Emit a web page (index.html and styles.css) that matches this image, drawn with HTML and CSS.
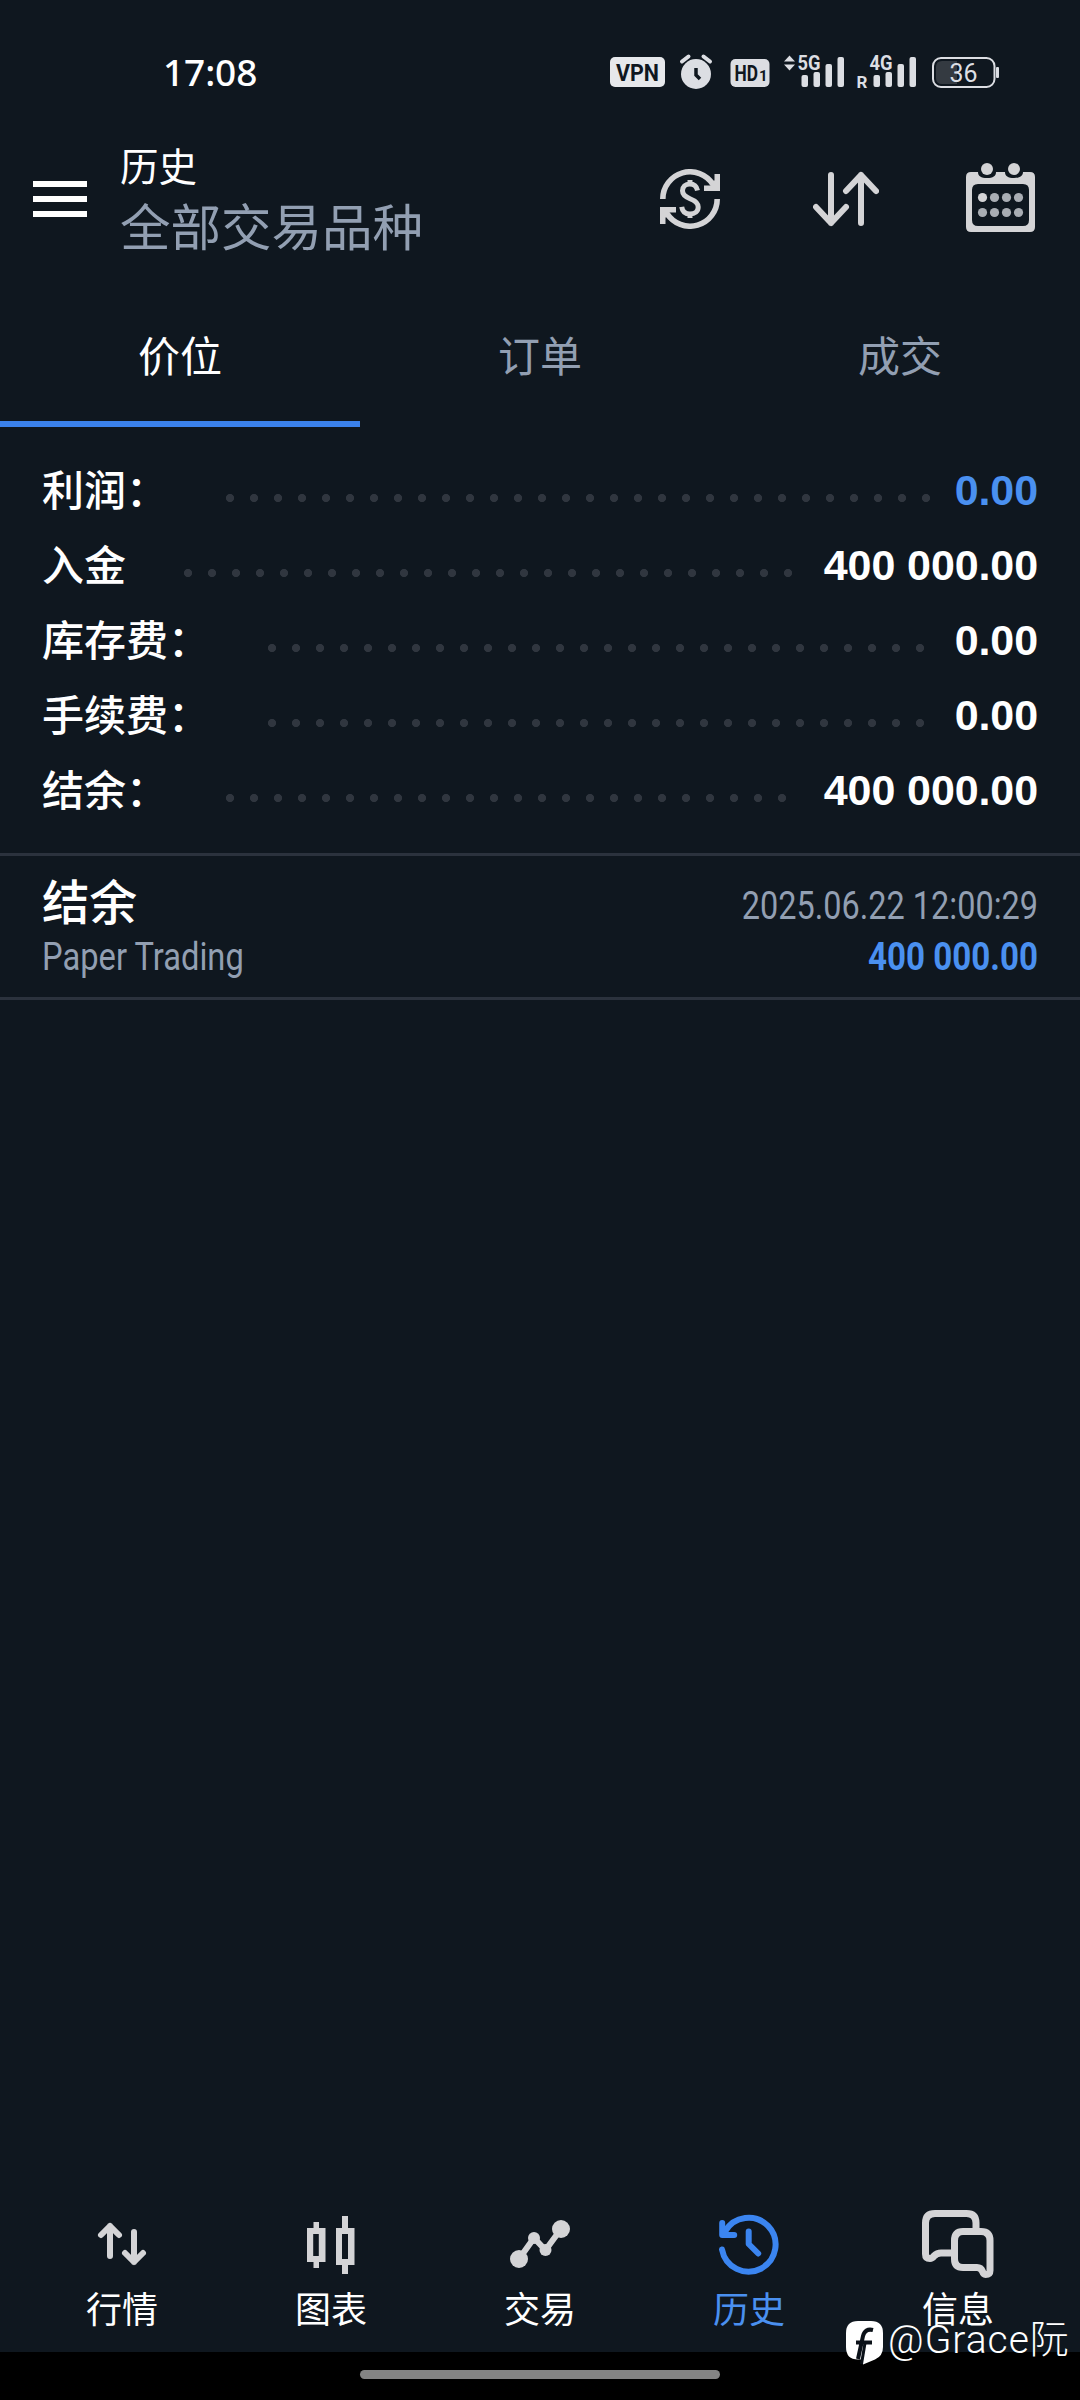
FILE: index.html
```html
<!DOCTYPE html>
<html lang="zh-CN">
<head>
<meta charset="utf-8">
<title>历史</title>
<link rel="stylesheet" href="styles.css">
</head>
<body>
<div class="screen">
  <div class="status">
    <span class="clock">17:08</span>
    <svg class="status-icons" width="392" height="40" viewBox="610 52 392 40">
      <rect x="610" y="57" width="55" height="30" rx="5" fill="#e6e8eb"/>
      <text x="637.5" y="80.5" class="t-vpn" text-anchor="middle" textLength="43" lengthAdjust="spacingAndGlyphs">VPN</text>
      <g stroke="#dcdee3" stroke-width="4" stroke-linecap="round" fill="none">
        <path d="M682 61.500l6.500-5M710 61.500l-6.500-5"/>
      </g>
      <circle cx="696" cy="74" r="15" fill="#dcdee3"/>
      <path d="M696 68v7l4 4" stroke="#0f171f" stroke-width="3.500" fill="none"/>
      <rect x="730.500" y="59" width="39" height="28" rx="5" fill="#dcdee3"/>
      <text x="734.500" y="80.500" class="t-hd" textLength="23.500" lengthAdjust="spacingAndGlyphs">HD</text>
      <text x="759" y="80.500" class="t-hd1">1</text>
      <g fill="#dcdee3">
        <path d="M789.500 55.500l5.500 6h-11zM789.500 70.500l5.500-6h-11z"/>
        <text x="797.500" y="69.500" class="t-net" textLength="23" lengthAdjust="spacingAndGlyphs">5G</text>
        <rect x="801.500" y="75" width="6.500" height="12" rx="2"/><rect x="813.500" y="72" width="6.500" height="15" rx="2"/><rect x="825.500" y="64" width="6.500" height="23" rx="2"/><rect x="837.500" y="57" width="6.500" height="30" rx="2"/>
        <text x="856.500" y="88" class="t-r">R</text>
        <text x="869.500" y="69.500" class="t-net" textLength="23" lengthAdjust="spacingAndGlyphs">4G</text>
        <rect x="873.500" y="75" width="6.500" height="12" rx="2"/><rect x="885.500" y="72" width="6.500" height="15" rx="2"/><rect x="897.500" y="64" width="6.500" height="23" rx="2"/><rect x="909.500" y="57" width="6.500" height="30" rx="2"/>
        <rect x="996" y="67" width="3" height="11" rx="1"/>
      </g>
      <path d="M957 61v23h-15q-6 0-6-6V67q0-6 6-6z" fill="#343a41"/>
      <rect x="933" y="58" width="61.500" height="29" rx="8" fill="none" stroke="#dcdee3" stroke-width="2"/>
      <text x="963.500" y="81.500" class="t-bat" text-anchor="middle" textLength="28" lengthAdjust="spacingAndGlyphs">36</text>
    </svg>
  </div>

  <header class="header">
    <svg class="menu" width="54" height="36" viewBox="0 0 54 36" fill="#fff"><path d="M0 0h54v6H0zM0 15h54v6H0zM0 30h54v6H0z"/></svg>
    <div class="titles">
      <h1 class="title">历史</h1>
      <div class="subtitle">全部交易品种</div>
    </div>
    <div class="tools">
      <svg width="60" height="60" viewBox="660 169 60 60" fill="none" stroke="#d4d4d6">
        <path d="M662.800 199A27.200 27.200 0 0 1 713 184.500M717.200 199A27.200 27.200 0 0 1 667 213.500" stroke-width="5.600"/>
        <path d="M714.500 174h5.500v17h-16v-5.500h7l-2-4 5.500-1zM665.500 224h-5.500v-17h16v5.500h-7l2 4-5.500 1z" fill="#d4d4d6" stroke="none"/>
        <path d="M697.500 190.500c-.800-4-3.700-6.500-7.700-6.500-4.300 0-7.300 2.700-7.300 6.800 0 4 2.700 6 7.500 7.900 5.200 2 8.200 4.200 8.200 8.300 0 4.300-3.400 7-8.200 7-4.400 0-7.600-2.600-8.300-7.200M690 180v4M690 214v4" stroke-width="5"/>
      </svg>
      <svg width="66" height="60" viewBox="813 169 66 60" fill="none" stroke="#d4d4d6" stroke-width="6" stroke-linecap="round" stroke-linejoin="round">
        <path d="M831 175v48M816 207l15 16 15-16M861 223v-48M846 191l15-16 15 16"/>
      </svg>
      <svg width="69" height="69" viewBox="966 163 69 69" fill="#d4d4d6">
        <path fill-rule="evenodd" d="M971 172h7c0 4 3 6 9 6s9-2 9-6h9c0 4 3 6 9 6s9-2 9-6h7q5 0 5 5v50q0 5-5 5h-59q-5 0-5-5v-50q0-5 5-5zM978 184q-6 0-6 6v30q0 6 6 6h45q6 0 6-6v-30q0-6-6-6z"/>
        <circle cx="987" cy="169" r="6"/><circle cx="1014" cy="169" r="6"/>
        <circle cx="982.500" cy="197.500" r="4.600"/>
        <g fill="#a9adb3"><circle cx="994.500" cy="197.500" r="4.600"/><circle cx="1006.500" cy="197.500" r="4.600"/><circle cx="1018.500" cy="197.500" r="4.600"/><circle cx="982.500" cy="212.500" r="4.600"/><circle cx="994.500" cy="212.500" r="4.600"/><circle cx="1006.500" cy="212.500" r="4.600"/><circle cx="1018.500" cy="212.500" r="4.600"/></g>
      </svg>
    </div>
  </header>

  <nav class="tabs">
    <div class="tab tab-on">价位</div>
    <div class="tab">订单</div>
    <div class="tab">成交</div>
  </nav>

  <section class="summary">
    <div class="row"><span class="label">利润：</span><i class="dots"></i><span class="value blue">0.00</span></div>
    <div class="row"><span class="label">入金</span><i class="dots"></i><span class="value">400 000.00</span></div>
    <div class="row"><span class="label">库存费：</span><i class="dots"></i><span class="value">0.00</span></div>
    <div class="row"><span class="label">手续费：</span><i class="dots"></i><span class="value">0.00</span></div>
    <div class="row"><span class="label">结余：</span><i class="dots"></i><span class="value">400 000.00</span></div>
  </section>

  <section class="deal">
    <div class="deal-left">
      <div class="deal-name">结余</div>
      <div class="deal-note">Paper Trading</div>
    </div>
    <div class="deal-right">
      <div class="deal-date">2025.06.22 12:00:29</div>
      <div class="deal-sum">400 000.00</div>
    </div>
  </section>

  <nav class="bottom">
    <div class="item">
      <svg width="72" height="72" viewBox="86 2208 72 72" fill="none" stroke="#d4d4d6" stroke-width="6" stroke-linecap="round" stroke-linejoin="round"><path d="M110 2256v-30M101 2235l9-9 9 9M134 2232v30M125 2253l9 9 9-9"/></svg>
      <span>行情</span>
    </div>
    <div class="item">
      <svg width="72" height="72" viewBox="295.500 2208 72 72" fill="#d4d4d6"><path fill-rule="evenodd" d="M314 2222h5.500v6h6.500v34h-6.500v6H314v-6h-6.500v-34h6.500zM313.700 2234v22h5.600v-22zM342.500 2216h6v12h6.500v37h-6.500v9h-6v-9h-6v-37h6zM342.500 2234v25h6v-25z"/></svg>
      <span>图表</span>
    </div>
    <div class="item">
      <svg width="72" height="72" viewBox="504 2208 72 72" fill="#d4d4d6"><path d="M519 2259l15-21 11.500 12 15.500-21" fill="none" stroke="#d4d4d6" stroke-width="6"/><circle cx="519" cy="2259" r="9"/><circle cx="534" cy="2238" r="6"/><circle cx="545.500" cy="2250" r="6"/><circle cx="561" cy="2229" r="9"/></svg>
      <span>交易</span>
    </div>
    <div class="item item-on">
      <svg width="72" height="72" viewBox="713 2208 72 72" fill="none" stroke="#3b85f0" stroke-width="6" stroke-linecap="round" stroke-linejoin="round"><path d="M722 2249.500A27 27 0 1 0 725 2231.500M722.200 2223v12h12M722.500 2234.500l4-6M748.700 2231.500v12.500l9.500 9.500"/></svg>
      <span>历史</span>
    </div>
    <div class="item">
      <svg width="78" height="72" viewBox="919 2208 78 72" fill="none" stroke="#d4d4d6" stroke-width="7" stroke-linecap="butt" stroke-linejoin="round"><path d="M976 2229v-6q0-9.500-9.500-9.500h-31.500q-9.500 0-9.500 9.500v31q0 4.500 4.500 4.500 2 0 4-2.500 3-3 7-3h11"/><path d="M963 2231.500h18q9 0 9 9v30q0 4-4.500 4-2 0-3-3-1.500-4-5.500-4h-14q-8.500 0-8.500-8.500v-18.500q0-9 8.500-9z"/></svg>
      <span>信息</span>
    </div>
  </nav>

  <div class="system"><div class="pill"></div></div>

  <div class="mark">
    <svg width="38" height="44" viewBox="0 0 38 44"><path d="M12 0h13q12 0 12 12v14q0 9-8 12.500L17 43.500V38.500H12Q0 38.500 0 26V12Q0 0 12 0z" fill="#fff"/><path d="M27 9q-8-2-10 6l-5 23M10 21.500h16" fill="none" stroke="#0b1118" stroke-width="4"/><path d="M19 22l-3.500 21" stroke="#0b1118" stroke-width="3" fill="none"/></svg>
    <span class="mark-name">@Grace阮</span>
  </div>
</div>
</body>
</html>
```
FILE: styles.css
```css
* { box-sizing: border-box; }
body { margin: 0; background: #0f171f; }
.screen {
  position: relative;
  width: 1080px;
  height: 2400px;
  display: flex;
  flex-direction: column;
  overflow: hidden;
  background: #0f171f;
  color: #fff;
  font-family: Roboto, "Noto Sans CJK SC", sans-serif;
}
.status {
  height: 100px;
  padding: 52px 78px 0 163px;
  display: flex;
  justify-content: space-between;
  align-items: flex-start;
}
.clock { font: 500 37px/40px "Noto Sans", sans-serif; letter-spacing: -0.1px; }
.status-icons { font-family: Roboto, sans-serif; }
.t-vpn { font-size: 24px; font-weight: 700; fill: #0f171f; }
.t-hd { font-size: 22px; font-weight: 700; fill: #0f171f; }
.t-hd1 { font-size: 15px; font-weight: 700; fill: #0f171f; }
.t-net { font-size: 20px; font-weight: 700; }
.t-r { font-size: 17px; font-weight: 700; }
.t-bat { font-size: 25px; fill: #dcdee3; }

.header {
  height: 199px;
  display: flex;
  align-items: flex-start;
  padding: 0 45px 0 33px;
}
.menu { margin-top: 81px; }
.titles { margin: 40px 0 0 33px; white-space: nowrap; }
.title { margin: 0; font-size: 38.500px; line-height: 56px; font-weight: 400; }
.subtitle { font-size: 50.500px; line-height: 66px; color: #929fb2; }
.tools { margin-left: auto; height: 200px; display: flex; align-items: flex-start; }
.tools svg { margin-top: 69px; }
.tools svg:nth-child(2) { margin-left: 93px; }
.tools svg:nth-child(3) { margin-left: 87px; margin-top: 63px; }

.tabs { height: 128px; display: grid; grid-template-columns: repeat(3, 1fr); }
.tab {
  border-bottom: 6px solid transparent;
  text-align: center;
  font-size: 42px;
  line-height: 118px;
  color: #929fb2;
}
.tab-on { color: #fff; border-color: #3b82ec; }

.summary { padding: 26px 42px 26px; height: 429px; border-bottom: 3px solid #2b323d; }
.row { display: flex; height: 75px; align-items: center; }
.label { font-size: 42px; font-weight: 500; line-height: 75px; padding-top: 2px; }
.dots {
  flex: 1;
  height: 24px;
  margin: 14px 22px 0 50.400px;
  background: radial-gradient(circle at center, #30363f 3.700px, transparent 4.400px) 0 0 / 24px 24px repeat-x;
}
.value { font-family: "Liberation Sans", sans-serif; font-size: 43px; font-weight: 700; line-height: 75px; letter-spacing: -0.1px; }
.blue { color: #4a90f0; }

.deal {
  height: 144px;
  padding: 0 42px;
  display: flex;
  justify-content: space-between;
  border-bottom: 3px solid #2b323d;
  white-space: nowrap;
}
.deal-left { padding-top: 17px; }
.deal-right { padding-top: 25px; text-align: right; }
.deal-name { font-size: 47.500px; font-weight: 500; line-height: 62px; }
.deal-note, .deal-date, .deal-sum { font-size: 39px; line-height: 50px; color: #929fb2; }
.deal-note { line-height: 45px; transform: scaleX(.838); transform-origin: left; }
.deal-date { transform: scaleX(.832); transform-origin: right; }
.deal-sum { line-height: 52px; transform: scaleX(.85); transform-origin: right; font-weight: 700; color: #4a90f0; }

.bottom {
  margin-top: auto;
  height: 144px;
  padding: 0 17.500px;
  display: grid;
  grid-template-columns: repeat(5, 1fr);
}
.item { display: flex; flex-direction: column; align-items: center; font-size: 36px; line-height: 62px; }
.item-on { color: #4a90f0; }
.system { height: 48px; background: #000; display: flex; justify-content: center; padding-top: 18px; }
.pill { width: 360px; height: 9px; border-radius: 5px; background: #848484; }

.mark {
  position: absolute;
  left: 846px;
  top: 2321px;
  display: flex;
  gap: 4px;
  font-size: 39px;
  line-height: 38px;
  font-weight: 300;
  white-space: nowrap;
}
.mark-name { letter-spacing: 1px; }
```
